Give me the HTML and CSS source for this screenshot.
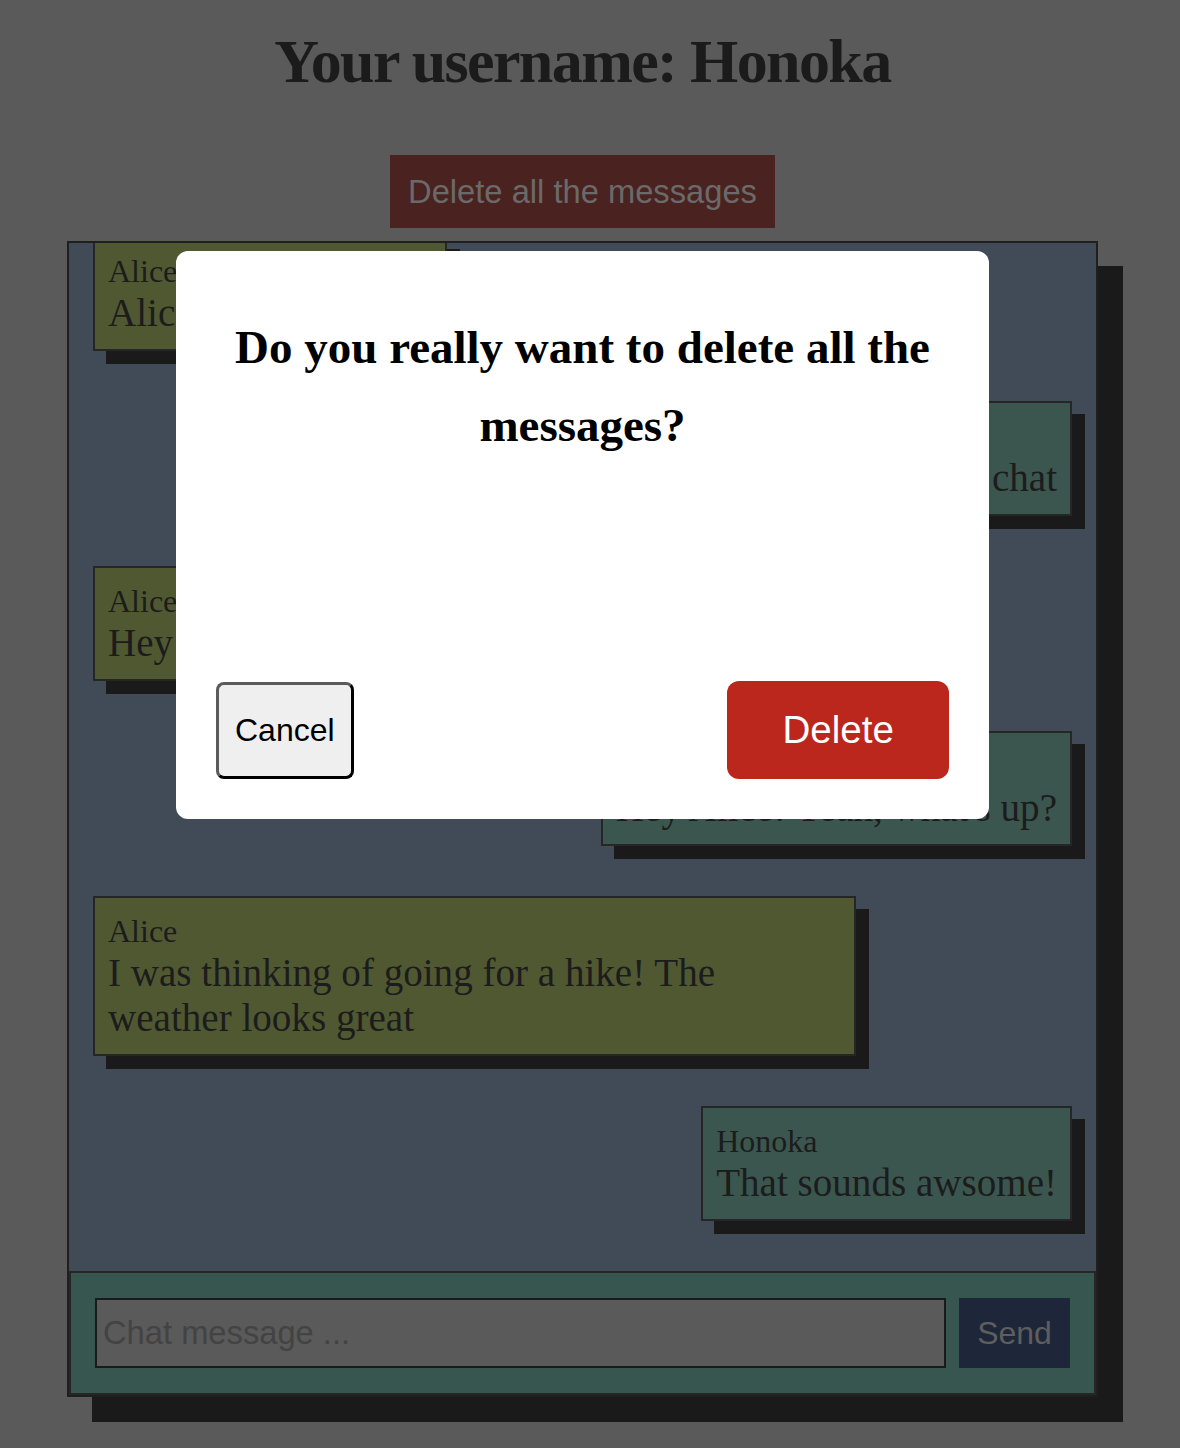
FILE: index.html
```html
<!DOCTYPE html>
<html lang="en">
<head>
<meta charset="utf-8">
<title>Chat</title>
<link rel="stylesheet" href="styles.css">
</head>
<body>
<div class="page">
  <h1 class="title">Your username: Honoka</h1>
  <div class="toolbar">
    <button class="clear-btn" type="button">Delete all the messages</button>
  </div>
  <div class="chat">
    <div class="messages">
      <div class="msg msg-other">
        <div class="msg-name">Alice</div>
        <div class="msg-text">Alice joined the chat</div>
      </div>
      <div class="msg msg-own">
        <div class="msg-name">Honoka</div>
        <div class="msg-text">Honoka joined the chat</div>
      </div>
      <div class="msg msg-other">
        <div class="msg-name">Alice</div>
        <div class="msg-text">Hey Honoka! How are you?</div>
      </div>
      <div class="msg msg-own">
        <div class="msg-name">Honoka</div>
        <div class="msg-text">Hey Alice! Yeah, what's up?</div>
      </div>
      <div class="msg msg-other">
        <div class="msg-name">Alice</div>
        <div class="msg-text">I was thinking of going for a hike! The weather looks great</div>
      </div>
      <div class="msg msg-own">
        <div class="msg-name">Honoka</div>
        <div class="msg-text">That sounds awsome!</div>
      </div>
    </div>
    <form class="composer">
      <input class="composer-input" type="text" placeholder="Chat message ...">
      <button class="send-btn" type="button">Send</button>
    </form>
    <div class="modal">
      <h2 class="modal-title">Do you really want to delete all the messages?</h2>
      <div class="modal-actions">
        <button class="btn-cancel" type="button">Cancel</button>
        <button class="btn-delete" type="button">Delete</button>
      </div>
    </div>
  </div>
</div>
</body>
</html>
```
FILE: styles.css
```css
html, body {
  margin: 0;
  padding: 0;
  background: #5a5a5a;
}

body {
  font-family: "Liberation Serif", "Times New Roman", serif;
  color: #1b1b1b;
  height: 1448px;
  overflow: hidden;
}

.page {
  width: 1165px;
  display: flex;
  flex-direction: column;
  align-items: center;
}

.title {
  margin: 25px 0 0;
  font-size: 62px;
  letter-spacing: -1.6px;
  font-weight: bold;
  line-height: 72px;
  color: #1b1b1b;
}

.toolbar {
  margin-top: 58px;
}

.clear-btn {
  display: block;
  height: 73px;
  padding: 0 18px;
  border: none;
  background: #4a2220;
  color: #6a6a6a;
  font-family: "Liberation Sans", Arial, sans-serif;
  font-size: 32.7px;
}

.chat {
  position: relative;
  margin-top: 13px;
  width: 1031px;
  height: 1156px;
  box-sizing: border-box;
  border: 2px solid #1f1f1f;
  background: #414b57;
  box-shadow: 25px 25px 0 #1a1a1a;
  display: flex;
  flex-direction: column;
}

.messages {
  flex: 1;
  min-height: 0;
  overflow: hidden;
  display: flex;
  flex-direction: column;
  justify-content: flex-end;
  gap: 50px;
  padding: 0 24px 50px;
}

.msg {
  flex: none;
  max-width: 763px;
  box-sizing: border-box;
  border: 2px solid #262626;
  padding: 14.5px 13px;
  box-shadow: 13px 13px 0 #1a1a1a;
  color: #1c1c1c;
}

.msg-other {
  align-self: flex-start;
  background: #505832;
}

.msg-own {
  align-self: flex-end;
  background: #3b564f;
}

.msg-name {
  font-size: 32px;
}

.msg-text {
  font-size: 39.1px;
}

.composer {
  flex: none;
  margin: 0;
  height: 124px;
  box-sizing: border-box;
  border: 2px solid #262626;
  background: #385650;
  display: flex;
  align-items: center;
  gap: 13px;
  padding: 0 24px;
}

.composer-input {
  flex: 1;
  height: 70px;
  box-sizing: border-box;
  border: 2px solid #1a1a1a;
  background: #5a5a5a;
  padding: 0 6px;
  margin: 0;
  font-family: "Liberation Sans", Arial, sans-serif;
  font-size: 32.7px;
  color: #1a1a1a;
  outline: none;
}

.composer-input::placeholder {
  color: #434343;
}

.send-btn {
  width: 111px;
  height: 70px;
  border: none;
  background: #1e2639;
  color: #5e5e5e;
  font-family: "Liberation Sans", Arial, sans-serif;
  font-size: 32px;
  padding: 0;
  margin: 0;
}

.modal {
  position: absolute;
  top: 8px;
  left: 107px;
  width: 813px;
  height: 568px;
  box-sizing: border-box;
  padding: 40px;
  background: #ffffff;
  border-radius: 12px;
  display: flex;
  flex-direction: column;
  justify-content: space-between;
}

.modal-title {
  margin: 17px 0 0;
  font-size: 47px;
  line-height: 78px;
  font-weight: bold;
  text-align: center;
  color: #000;
}

.modal-actions {
  display: flex;
  justify-content: space-between;
  align-items: center;
}

.btn-cancel {
  padding: 27px 16px;
  border: 3px solid;
  border-color: #5b5b5b #000 #000 #5b5b5b;
  border-radius: 8px;
  background: #efefef;
  color: #000;
  font-family: "Liberation Sans", Arial, sans-serif;
  font-size: 32px;
  line-height: normal;
}

.btn-delete {
  padding: 27px 55px;
  border: none;
  border-radius: 12px;
  background: #bb271c;
  color: #fff;
  font-family: "Liberation Sans", Arial, sans-serif;
  font-size: 38.6px;
  line-height: normal;
}
```
